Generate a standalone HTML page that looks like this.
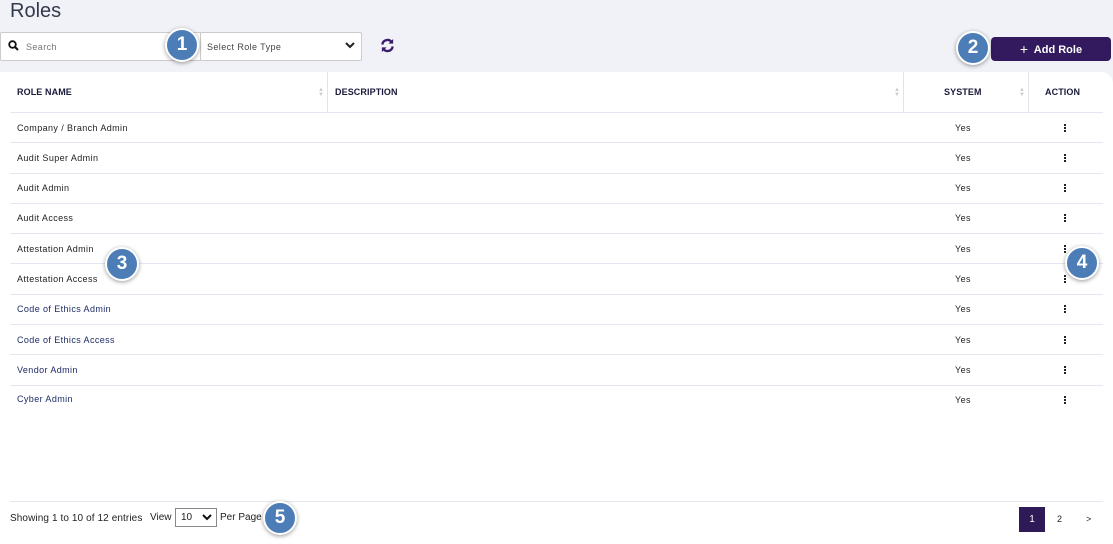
<!DOCTYPE html><html><head><style>
body{margin:0;width:1113px;height:544px;background:#f1f2f7;font-family:"Liberation Sans",sans-serif;position:relative;overflow:hidden;color:#222}
.a{position:absolute}
h1{position:absolute;left:10px;top:0;margin:0;font-size:20px;font-weight:normal;color:#333a4d}
.card{position:absolute;left:0;top:72px;width:1113px;height:472px;background:#fff;border-radius:0 12px 0 0}
.th{position:absolute;top:87px;font-size:9px;font-weight:bold;color:#1a1a3a;letter-spacing:0.1px}
.row{position:absolute;left:10px;width:1093px;border-top:1px solid #e6e6f0}
.t{position:absolute;font-size:9px;color:#222;letter-spacing:0.4px}
.vd{position:absolute;top:72px;height:40px;width:1px;background:#e2e2ea}
.dot{position:absolute;width:2px;height:2px;background:#222;box-shadow:0 3px 0 #222,0 -3px 0 #222}
.b{position:absolute;width:30px;height:30px;border-radius:50%;background:#4c7db6;border:2px solid #fff;box-shadow:0 1px 4px rgba(0,0,0,.4);color:#fff;font-weight:bold;font-size:19px;text-align:center;line-height:30px}
.sort{position:absolute;top:88px;font-size:6px;color:#ccc;line-height:5px}
</style></head><body>
<h1>Roles</h1>
<div class="a" style="left:0;top:32px;width:200px;height:27px;background:#fff;border:1px solid #ccc;border-radius:2px"></div>
<svg class="a" style="left:8px;top:40px" width="11" height="11" viewBox="0 0 11 11"><circle cx="4.5" cy="4.5" r="3.3" fill="none" stroke="#111" stroke-width="1.8"/><path d="M7 7l3 3" stroke="#111" stroke-width="2"/></svg>
<div class="t" style="left:26px;top:42px;color:#777">Search</div>
<div class="a" style="left:200px;top:32px;width:160px;height:27px;background:#fff;border:1px solid #ccc;border-radius:2px"></div>
<div class="t" style="left:207px;top:42px;color:#444">Select Role Type</div>
<svg class="a" style="left:345px;top:42px" width="10" height="7"><path d="M1 1l4 4 4-4" fill="none" stroke="#222" stroke-width="2"/></svg>
<svg class="a" style="left:380px;top:38px" width="15" height="15" viewBox="0 0 16 16"><path d="M2.5 7A5.5 5.5 0 0 1 12.5 4.5M13.5 9A5.5 5.5 0 0 1 3.5 11.5" fill="none" stroke="#3a1a6a" stroke-width="2.4"/><path d="M14 1v5h-5z M2 15v-5h5z" fill="#3a1a6a"/></svg>
<div class="a" style="left:991px;top:37px;width:120px;height:24px;background:#331a5f;border-radius:4px;color:#fff;font-size:11px;font-weight:bold;line-height:24px;text-align:center"><span style="font-size:14px;font-weight:normal;vertical-align:-1px">+</span>&nbsp; Add Role</div>
<div class="card"></div>
<div class="vd" style="left:327px"></div><div class="vd" style="left:903px"></div><div class="vd" style="left:1028px"></div>
<div class="th" style="left:17px">ROLE NAME</div><div class="th" style="left:335px">DESCRIPTION</div>
<div class="th" style="left:944px">SYSTEM</div><div class="th" style="left:1045px">ACTION</div>
<div class="sort" style="left:318px">▲<br>▼</div><div class="sort" style="left:894px">▲<br>▼</div><div class="sort" style="left:1019px">▲<br>▼</div>
<div class="row" style="top:112px"></div>
<div class="row" style="top:142px"></div><div class="row" style="top:173px"></div><div class="row" style="top:203px"></div><div class="row" style="top:233px"></div><div class="row" style="top:263px"></div><div class="row" style="top:294px"></div><div class="row" style="top:324px"></div><div class="row" style="top:354px"></div><div class="row" style="top:385px"></div><div class="row" style="top:501px"></div>
<div class="t" style="left:17px;top:123px">Company / Branch Admin</div>
<div class="t" style="left:17px;top:153px">Audit Super Admin</div>
<div class="t" style="left:17px;top:183px">Audit Admin</div>
<div class="t" style="left:17px;top:213px">Audit Access</div>
<div class="t" style="left:17px;top:244px">Attestation Admin</div>
<div class="t" style="left:17px;top:274px">Attestation Access</div>
<div class="t" style="left:17px;top:304px;color:#1d2b66">Code of Ethics Admin</div>
<div class="t" style="left:17px;top:335px;color:#1d2b66">Code of Ethics Access</div>
<div class="t" style="left:17px;top:365px;color:#1d2b66">Vendor Admin</div>
<div class="t" style="left:17px;top:394px;color:#1d2b66">Cyber Admin</div>
<div class="t" style="left:955px;top:123px">Yes</div><div class="t" style="left:955px;top:153px">Yes</div><div class="t" style="left:955px;top:183px">Yes</div><div class="t" style="left:955px;top:213px">Yes</div><div class="t" style="left:955px;top:244px">Yes</div><div class="t" style="left:955px;top:274px">Yes</div><div class="t" style="left:955px;top:304px">Yes</div><div class="t" style="left:955px;top:335px">Yes</div><div class="t" style="left:955px;top:365px">Yes</div><div class="t" style="left:955px;top:395px">Yes</div>
<div class="dot" style="left:1064px;top:127px"></div><div class="dot" style="left:1064px;top:157px"></div><div class="dot" style="left:1064px;top:187px"></div><div class="dot" style="left:1064px;top:217px"></div><div class="dot" style="left:1064px;top:248px"></div><div class="dot" style="left:1064px;top:278px"></div><div class="dot" style="left:1064px;top:308px"></div><div class="dot" style="left:1064px;top:339px"></div><div class="dot" style="left:1064px;top:369px"></div><div class="dot" style="left:1064px;top:399px"></div>
<div class="t" style="left:10px;top:513px;font-size:10px;letter-spacing:0.1px">Showing 1 to 10 of 12 entries</div>
<div class="t" style="left:150px;top:512px;font-size:10px;letter-spacing:0">View</div>
<div class="a" style="left:175px;top:508px;width:40px;height:17px;border:1px solid #888;background:#fff;font-size:10px;line-height:17px;text-indent:5px">10</div>
<svg class="a" style="left:202px;top:514px" width="10" height="7"><path d="M1 1l4 4 4-4" fill="none" stroke="#111" stroke-width="2"/></svg>
<div class="t" style="left:220px;top:512px;font-size:10px;letter-spacing:0">Per Page</div>
<div class="a" style="left:1019px;top:507px;width:26px;height:25px;background:#2d1a57;color:#fff;font-size:10px;text-align:center;line-height:25px">1</div>
<div class="t" style="left:1057px;top:514px">2</div><div class="t" style="left:1086px;top:514px">&gt;</div>
<div class="b" style="left:165px;top:28px">1</div>
<div class="b" style="left:956px;top:31px">2</div>
<div class="b" style="left:105px;top:247px">3</div>
<div class="b" style="left:1065px;top:246px">4</div>
<div class="b" style="left:263px;top:501px">5</div>
</body></html>
